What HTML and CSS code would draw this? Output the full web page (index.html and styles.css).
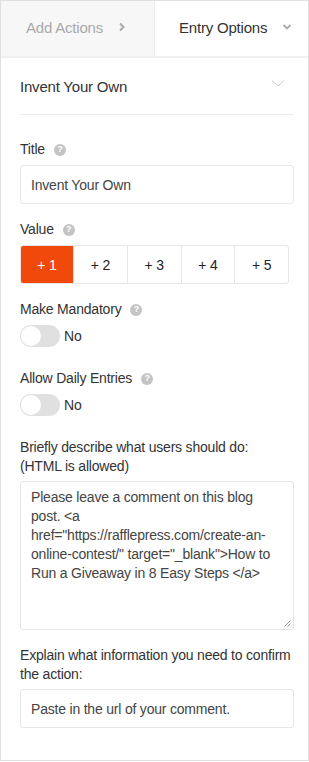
FILE: index.html
```html
<!DOCTYPE html>
<html>
<head>
<meta charset="utf-8">
<link rel="stylesheet" href="styles.css">
</head>
<body>
<div class="panel">
  <div class="tabs">
    <div class="tab tab-inactive">
      <span>Add Actions</span>
      <svg class="chev-right" width="8" height="10" viewBox="0 0 8 10"><path d="M2 1.5 L5.5 5 L2 8.5" fill="none" stroke="#aaa" stroke-width="2"/></svg>
    </div>
    <div class="tab tab-active">
      <span>Entry Options</span>
      <svg class="chev-down" width="10" height="8" viewBox="0 0 10 8"><path d="M1.5 2 L5 5.5 L8.5 2" fill="none" stroke="#aaa" stroke-width="1.8"/></svg>
    </div>
  </div>
  <div class="content">
    <div class="section-head">
      <span>Invent Your Own</span>
      <svg width="14" height="9" viewBox="0 0 14 9"><path d="M1 1.5 L7 7 L13 1.5" fill="none" stroke="#ccc" stroke-width="1"/></svg>
    </div>

    <div class="field">
      <div class="label">Title <span class="help">?</span></div>
      <div class="input">Invent Your Own</div>
    </div>

    <div class="field">
      <div class="label">Value <span class="help">?</span></div>
      <div class="btn-group">
        <div class="btn active">+ 1</div>
        <div class="btn">+ 2</div>
        <div class="btn">+ 3</div>
        <div class="btn">+ 4</div>
        <div class="btn">+ 5</div>
      </div>
    </div>

    <div class="field">
      <div class="label">Make Mandatory <span class="help">?</span></div>
      <div class="toggle-row"><span class="toggle"><span class="knob"></span></span><span>No</span></div>
    </div>

    <div class="field">
      <div class="label">Allow Daily Entries <span class="help">?</span></div>
      <div class="toggle-row"><span class="toggle"><span class="knob"></span></span><span>No</span></div>
    </div>

    <div class="field">
      <div class="label multi">Briefly describe what users should do:<br>(HTML is allowed)</div>
      <div class="textarea">Please leave a comment on this blog post. &lt;a href="https://rafflepress.com/create-an-online-contest/" target="_blank"&gt;How to Run a Giveaway in 8 Easy Steps &lt;/a&gt;
        <svg class="grip" width="7" height="7" viewBox="0 0 7 7"><path d="M6.5 0.5 L0.5 6.5 M6.5 3.5 L3.5 6.5" stroke="#888" stroke-width="0.8"/></svg>
      </div>
    </div>

    <div class="field last">
      <div class="label multi">Explain what information you need to confirm the action:</div>
      <div class="input">Paste in the url of your comment.</div>
    </div>
  </div>
</div>
</body>
</html>
```
FILE: styles.css
```css
* { box-sizing: border-box; }
html, body { margin: 0; padding: 0; background: #fff; }
body {
  font-family: "Liberation Sans", Arial, sans-serif;
  color: #333;
  font-size: 14px;
  letter-spacing: -0.2px;
}
.panel {
  width: 309px;
  height: 761px;
  border: 1px solid #e0e0e0;
  background: #fff;
}
.tabs {
  display: flex;
  height: 57px;
  border-bottom: 2px solid #f0f0f0;
}
.tab {
  display: flex;
  align-items: center;
  font-size: 15px;
  padding-bottom: 3px;
}
.tab-inactive {
  width: 154px;
  background: #f7f7f7;
  border-right: 1px solid #eee;
  color: #aaa;
  padding-left: 25px;
  gap: 15px;
}
.tab-active {
  flex: 1;
  color: #333;
  padding-left: 24px;
  gap: 15px;
}
.content {
  padding: 0 14px 0 19px;
}
.section-head {
  display: flex;
  align-items: center;
  justify-content: space-between;
  height: 57px;
  border-bottom: 1px solid #eee;
  font-size: 15px;
  font-weight: 500;
  color: #333;
  padding-right: 9px;
}
.section-head svg { margin-top: -5px; }
.field { margin-top: 25px; }
.field + .field { margin-top: 16px; }
.label {
  display: flex;
  align-items: center;
  gap: 9px;
  line-height: 19px;
  margin-bottom: 6px;
  color: #333;
}
.label.multi { display: block; margin-bottom: 5px; }
.help {
  display: inline-flex;
  align-items: center;
  justify-content: center;
  width: 12px;
  height: 12px;
  border-radius: 50%;
  background: #c4c4c4;
  color: #fff;
  font-size: 9px;
  font-weight: bold;
  letter-spacing: 0;
}
.input {
  height: 39px;
  border: 1px solid #e6e6e6;
  border-radius: 3px;
  padding: 0 10px;
  display: flex;
  align-items: center;
  color: #444;
}
.btn-group {
  display: flex;
  width: 269px;
  height: 39px;
  border: 1px solid #e6e6e6;
  border-radius: 3px;
  overflow: hidden;
}
.btn {
  flex: 1;
  display: flex;
  align-items: center;
  justify-content: center;
  border-left: 1px solid #e6e6e6;
  font-size: 14px;
  color: #222;
}
.btn:first-child { border-left: none; flex: 0 0 52px; }
.btn.active { background: #f1490b; color: #fff; }
.toggle-row {
  display: flex;
  align-items: center;
  gap: 4px;
  color: #333;
  padding-bottom: 6px;
}
.toggle {
  position: relative;
  width: 40px;
  height: 22px;
  border-radius: 11px;
  background: #e0e0e0;
}
.knob {
  position: absolute;
  left: 1px;
  top: 1px;
  width: 20px;
  height: 20px;
  border-radius: 50%;
  background: #fff;
}
.textarea {
  position: relative;
  height: 149px;
  border: 1px solid #e6e6e6;
  border-radius: 3px;
  padding: 6px 10px;
  line-height: 19px;
  color: #444;
}
.grip { position: absolute; right: 2px; bottom: 2px; }
```
